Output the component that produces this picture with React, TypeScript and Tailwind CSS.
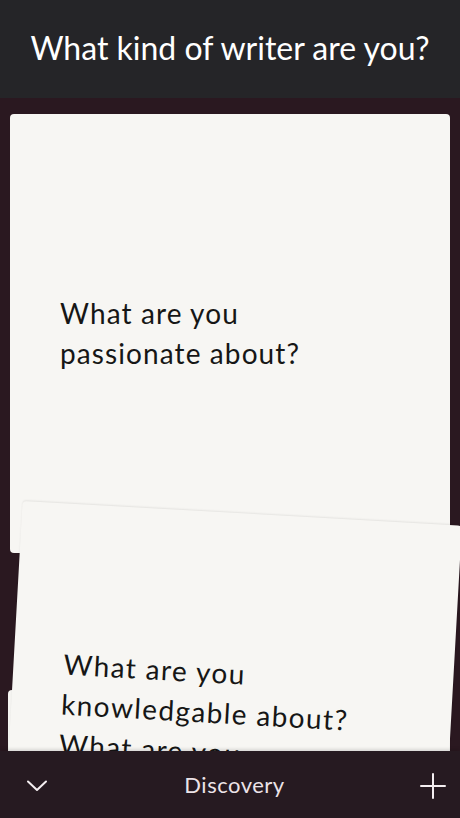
import React from "react";

const font = { fontFamily: "Lato, 'Noto Sans', sans-serif" };

export default function App() {
  return (
    <div className="w-[460px] h-[818px] flex flex-col overflow-hidden bg-[#2a1820]" style={font}>
      <header className="h-[98px] shrink-0 bg-[#252528] flex items-center justify-center">
        <h1 className="text-[32px] font-normal text-white tracking-[0px] pb-[2px]">What kind of writer are you?</h1>
      </header>
      <main className="relative flex-1 overflow-hidden">
        <div className="absolute left-[8px] top-[592px] w-[442px] h-[300px] bg-[#f6f5f2] rounded-[4px]" />
        <div className="ml-[10px] mt-[16px] w-[440px] h-[439px] bg-[#f7f6f3] rounded-[4px] flex flex-col justify-center pl-[50px]">
          <p className="text-[28px] leading-[40px] text-[#161616] tracking-[1.1px] -mt-[2px]">
            What are you<br />passionate about?
          </p>
        </div>
        <div className="absolute left-[10px] top-[415px] w-[440px] h-[439px] bg-[#f7f6f3] rounded-[4px] rotate-[3.2deg] flex flex-col justify-center pl-[50px] shadow-[0_-1px_2px_rgba(0,0,0,0.08)]">
          <p className="text-[28px] leading-[40px] text-[#161616] tracking-[1.4px]">
            What are you<br />knowledgable about?<br />What are you<br />curious about?
          </p>
        </div>
      </main>
      <footer className="relative h-[67px] shrink-0 bg-[#261a21] flex items-center justify-between px-[27px] shadow-[0_-2px_3px_rgba(0,0,0,0.12)]">
        <svg width="20" height="12" viewBox="0 0 20 12" className="mt-[2px]">
          <path d="M1 1.5 L10 10 L19 1.5" fill="none" stroke="#f4eef1" strokeWidth="2" strokeLinecap="round" strokeLinejoin="round" />
        </svg>
        <span className="text-[22px] text-[#ece3e8] tracking-[0.5px] ml-[2px]">Discovery</span>
        <svg width="26" height="26" viewBox="0 0 26 26" className="-mr-[13px] mt-[2px]">
          <path d="M13 1 V25 M1 13 H25" fill="none" stroke="#f4eef1" strokeWidth="2" strokeLinecap="round" />
        </svg>
      </footer>
    </div>
  );
}
